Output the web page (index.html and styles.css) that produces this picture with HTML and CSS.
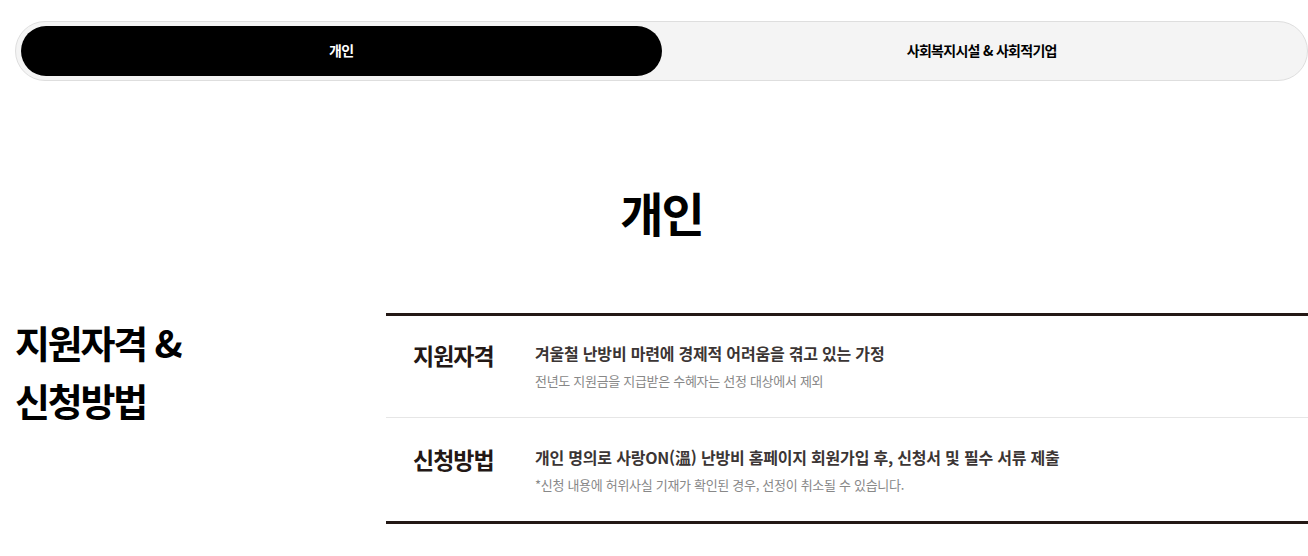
FILE: index.html
```html
<!DOCTYPE html>
<html lang="ko">
<head>
    <meta charset="UTF-8">
    <meta name="viewport" content="width=device-width, initial-scale=1.0">
    <title>지원자격 &amp; 신청방법</title>
    <link rel="stylesheet" href="styles.css">
</head>
<body>
    <div class="wrap">
        <ul class="tab-menu">
            <li class="tab active">개인</li>
            <li class="tab">사회복지시설 &amp; 사회적기업</li>
        </ul>

        <h2 class="page-title">개인</h2>

        <section class="info">
            <h3 class="info-heading">지원자격 &amp;<br>신청방법</h3>
            <div class="info-table">
                <div class="info-row">
                    <div class="info-label">지원자격</div>
                    <div class="info-text">
                        <p class="main">겨울철 난방비 마련에 경제적 어려움을 겪고 있는 가정</p>
                        <p class="note">전년도 지원금을 지급받은 수혜자는 선정 대상에서 제외</p>
                    </div>
                </div>
                <div class="info-row">
                    <div class="info-label">신청방법</div>
                    <div class="info-text">
                        <p class="main">개인 명의로 사랑ON(溫) 난방비 홈페이지 회원가입 후, 신청서 및 필수 서류 제출</p>
                        <p class="note">*신청 내용에 허위사실 기재가 확인된 경우, 선정이 취소될 수 있습니다.</p>
                    </div>
                </div>
            </div>
        </section>
    </div>
</body>
</html>
```

FILE: styles.css
```css
body {
    margin: 0;
    font-family: "Noto Sans CJK KR", "Noto Sans", sans-serif;
    color: #000;
    background-color: #fff;
}
.wrap {
    width: 1293px;
    margin-left: 15px;
    padding-top: 21px;
}
.tab-menu {
    display: flex;
    margin: 0;
    padding: 4px 5px;
    list-style: none;
    background-color: #f4f4f4;
    border: 1px solid #dedede;
    border-radius: 30px;
}
.tab {
    flex: 1;
    height: 50px;
    line-height: 48px;
    text-align: center;
    font-size: 14px;
    font-weight: 700;
    letter-spacing: -0.7px;
    border-radius: 25px;
    color: #000;
}
.tab.active {
    background-color: #000;
    color: #fff;
}
.page-title {
    margin: 99px 0 69px;
    font-size: 47px;
    line-height: 64px;
    font-weight: 700;
    letter-spacing: -2px;
    text-align: center;
}
.info {
    display: grid;
    grid-template-columns: 371px 1fr;
}
.info-heading {
    margin: 0;
    font-size: 38px;
    line-height: 58px;
    font-weight: 700;
    letter-spacing: -2.2px;
}
.info-table {
    border-top: 3px solid #231815;
    border-bottom: 3px solid #231815;
}
.info-row {
    display: flex;
    padding: 24px 0 26px;
}
.info-row + .info-row {
    padding-top: 26px;
    border-top: 1px solid #e6e6e6;
}
.info-label {
    width: 122px;
    padding-left: 27px;
    font-size: 23px;
    line-height: 30px;
    font-weight: 700;
    letter-spacing: -1px;
    color: #231815;
}
.info-text p {
    margin: 0;
}
.info-text .main {
    font-size: 16px;
    line-height: 26px;
    font-weight: 700;
    letter-spacing: -0.2px;
    color: #3b3534;
}
.info-text .note {
    margin-top: 5px;
    font-size: 13px;
    line-height: 20px;
    letter-spacing: -0.3px;
    color: #888;
}
```
